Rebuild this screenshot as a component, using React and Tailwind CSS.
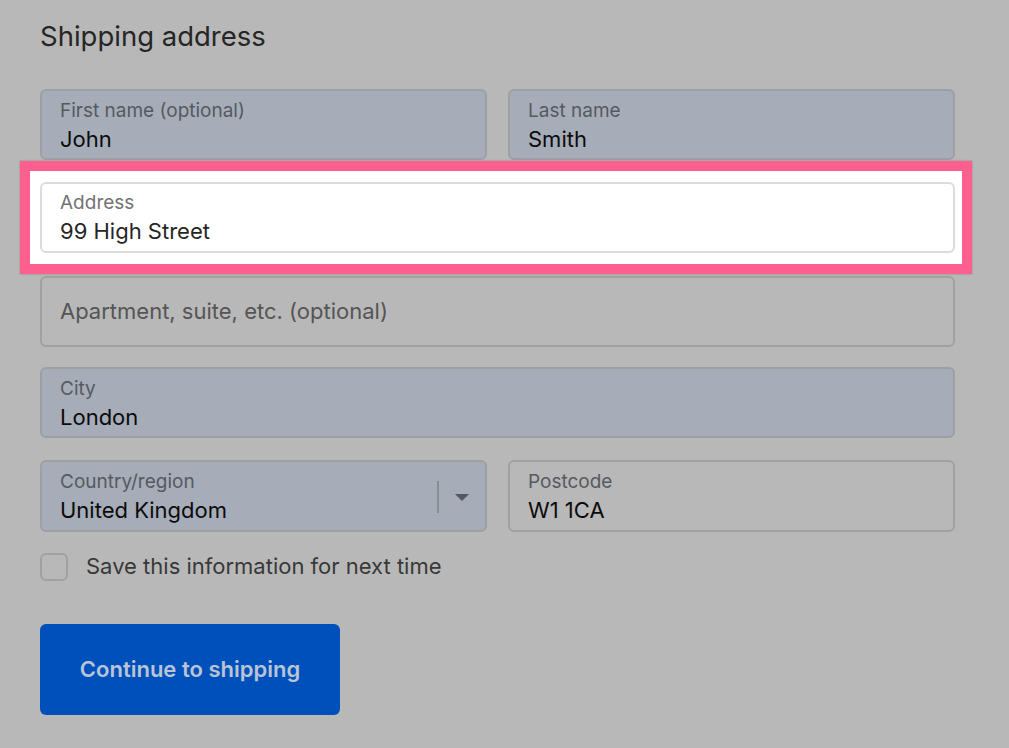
import React from 'react';

const font = { fontFamily: 'Inter, "Liberation Sans", Arial, sans-serif' };

const Field = ({ label, value, filled = true, className = '' }) => (
    <div
        className={`h-[71px] rounded-[6px] border-2 px-[18px] pt-[2px] flex flex-col justify-center ${
            filled ? 'bg-[#a6adb8] border-[#9d9fa3]' : 'bg-[#b8b8b8] border-[#a1a1a1]'
        } ${className}`}
    >
        <span className="text-[19px] leading-[22px] text-[#555a61]">{label}</span>
        <span className="mt-[4px] text-[22px] leading-[26px] text-[#0b0b0b]">{value}</span>
    </div>
);

const App = () => {
    return (
        <div className="w-[1009px] h-[748px] bg-[#b8b8b8] overflow-hidden" style={font}>
            <div className="pl-[40px] pr-[54px] pt-[18px]">
                <h2 className="text-[27.5px] leading-[36px] text-[#262626]">Shipping address</h2>

                <div className="mt-[35px] flex flex-col">
                    {/* Name row */}
                    <div className="grid grid-cols-2 gap-[21px]">
                        <Field label="First name (optional)" value="John" />
                        <Field label="Last name" value="Smith" />
                    </div>

                    {/* Highlighted address */}
                    <div className="relative mt-[22px] h-[71px]">
                        <div className="absolute left-[-20px] top-[-21px] right-[-17px] bottom-[-21px] border-[10px] border-[#fd5f8e] bg-white shadow-[0_0_2px_rgba(0,0,0,0.25)]" />
                        <div className="relative h-[71px] rounded-[6px] border-2 border-[#dcdcdc] bg-white px-[18px] flex flex-col justify-center">
                            <span className="text-[19px] leading-[22px] text-[#737373]">Address</span>
                            <span className="mt-[4px] text-[22px] leading-[26px] text-[#262626]">99 High Street</span>
                        </div>
                    </div>

                    {/* Apartment */}
                    <div className="mt-[23px] h-[71px] rounded-[6px] border-2 border-[#a1a1a1] bg-[#b8b8b8] px-[18px] flex items-center">
                        <span className="text-[22px] text-[#555555]">Apartment, suite, etc. (optional)</span>
                    </div>

                    <Field label="City" value="London" className="mt-[20px]" />

                    {/* Country / Postcode */}
                    <div className="mt-[22px] grid grid-cols-2 gap-[21px]">
                        <div className="h-[72px] rounded-[6px] border-2 border-[#9d9fa3] bg-[#a6adb8] pl-[18px] pt-[2px] flex items-center">
                            <div className="flex-1 flex flex-col">
                                <span className="text-[19px] leading-[22px] text-[#555a61]">Country/region</span>
                                <span className="mt-[4px] text-[22px] leading-[26px] text-[#0b0b0b]">United Kingdom</span>
                            </div>
                            <div className="w-[2px] h-[32px] bg-[#8a8d92]" />
                            <div className="w-[46px] flex justify-center">
                                <svg width="14" height="7" viewBox="0 0 14 7">
                                    <path d="M0 0 H14 L7 7 Z" fill="#55585d" />
                                </svg>
                            </div>
                        </div>
                        <Field label="Postcode" value="W1 1CA" filled={false} className="h-[72px]" />
                    </div>
                </div>

                {/* Save checkbox */}
                <label className="mt-[18px] flex items-center gap-[18px]">
                    <span className="w-[28px] h-[28px] rounded-[6px] border-2 border-[#a1a1a1] bg-[#b8b8b8]" />
                    <span className="text-[22px] text-[#383838]">Save this information for next time</span>
                </label>

                <button className="mt-[41px] w-[300px] h-[91px] rounded-[6px] bg-[#0050bb] text-[22px] font-semibold text-[#b9c5d6]">
                    Continue to shipping
                </button>
            </div>
        </div>
    );
};

export default App;
